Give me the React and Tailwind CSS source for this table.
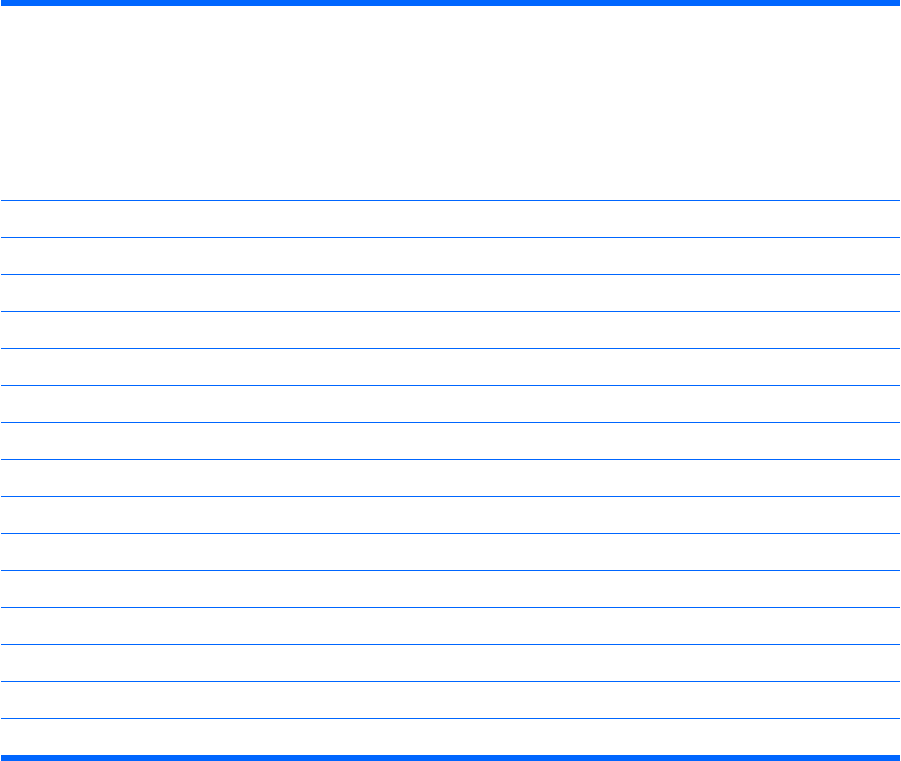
import React from 'react';

// Empty ruled table: thick rule top and bottom, 15 thin row rules between
const rows = Array.from({ length: 15 }, (_, i) => i);

const App = () => {
  return (
    <div className="w-[901px] h-[761px] bg-white overflow-hidden">
      <div className="ml-[1px] w-[899px] flex flex-col">
        <div className="h-[6px] bg-[#0066ff]" />
        <div className="h-[194px]" />
        {rows.map((r) => (
          <div key={r} className="h-[37px] border-t border-[#0066ff]" />
        ))}
        <div className="h-[6px] bg-[#0066ff]" />
      </div>
    </div>
  );
};

export default App;
